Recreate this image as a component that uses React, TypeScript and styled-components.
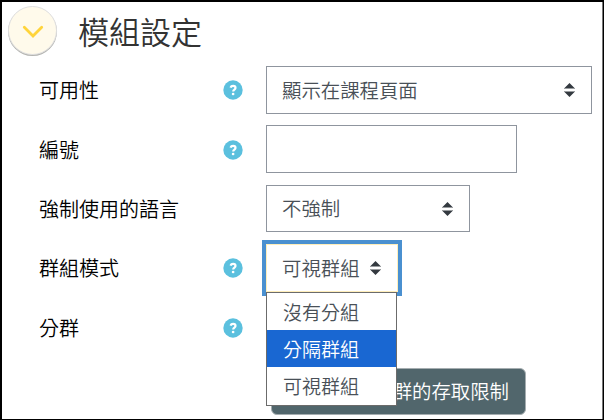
import React from 'react'
import styled, { createGlobalStyle } from 'styled-components'

type FormRowProps = {
  label: string
  help?: boolean
  height?: number
  gap?: number
  children?: React.ReactNode
}

const SortIcon: React.FunctionComponent = () => (
  <svg width="11" height="14" viewBox="0 0 11 14">
    <path d="M5.5 0 L10.5 5 H0.5 Z M5.5 14 L10.5 9 H0.5 Z" fill="#343a40" />
    <path d="M0 5.5 H11 M0 8.5 H11" stroke="#343a40" strokeOpacity="0.5" />
  </svg>
)

const HelpIcon: React.FunctionComponent = () => (
  <svg width="20" height="20" viewBox="0 0 20 20">
    <circle cx="10" cy="10" r="9.7" fill="#5bc0de" />
    <path
      d="M7.5 7.6 C8 6.3 8.9 5.9 10.1 5.9 C11.6 5.9 12.5 6.7 12.5 7.9 C12.5 9.6 10.2 9.5 10.2 11.5"
      fill="none"
      stroke="#fff"
      strokeWidth="2.2"
    />
    <circle cx="10.1" cy="14" r="1.35" fill="#fff" />
  </svg>
)

const FormRow: React.FunctionComponent<FormRowProps> = ({ label, help = true, height = 48, gap = 12, children }) => (
  <StyledRow $height={height} $gap={gap}>
    <StyledLabel>{label}</StyledLabel>
    <StyledHelp>{help && <HelpIcon />}</StyledHelp>
    {children}
  </StyledRow>
)

const options = ['沒有分組', '分隔群組', '可視群組']

const App: React.FunctionComponent = () => (
  <StyledPage>
    <GlobalStyle />
    <StyledHeader>
      <StyledToggle>
        <svg width="22" height="14" viewBox="0 0 22 14">
          <path d="M2.3 2.3 L11 11 L19.7 2.3" fill="none" stroke="#ffd43b" strokeWidth="2.8" strokeLinecap="round" />
        </svg>
      </StyledToggle>
      <StyledTitle>模組設定</StyledTitle>
    </StyledHeader>
    <FormRow label="可用性" gap={11}>
      <StyledSelect $width={326}>
        <span>顯示在課程頁面</span>
        <SortIcon />
      </StyledSelect>
    </FormRow>
    <FormRow label="編號" height={50} gap={10}>
      <StyledInput type="text" />
    </FormRow>
    <FormRow label="強制使用的語言" help={false} height={47}>
      <StyledSelect $width={204}>
        <span>不強制</span>
        <SortIcon />
      </StyledSelect>
    </FormRow>
    <FormRow label="群組模式">
      <StyledSelect $width={132} $focused>
        <span>可視群組</span>
        <SortIcon />
        <StyledMenu>
          {options.map((option, index) => (
            <StyledOption key={option} $selected={index === 1}>
              {option}
            </StyledOption>
          ))}
        </StyledMenu>
      </StyledSelect>
    </FormRow>
    <FormRow label="分群" gap={16} />
    <StyledButton>群的存取限制</StyledButton>
  </StyledPage>
)

const GlobalStyle = createGlobalStyle`
  * {
    box-sizing: border-box;
  }

  body {
    margin: 0;
    background: #fff;
    font-family: 'Noto Sans CJK TC', sans-serif;
    font-weight: 350;
  }
`

const StyledPage = styled('div')`
  width: 604px;
  height: 420px;
  overflow: hidden;
  background: #fff;
  border: solid #000;
  border-width: 2px 1px 1px 2px;
  box-shadow: inset -1px 0 0 #777;
`

const StyledHeader = styled('div')`
  display: flex;
  align-items: flex-start;
  height: 64px;
  padding: 4px 0 0 6px;
`

const StyledToggle = styled('span')`
  display: flex;
  align-items: center;
  justify-content: center;
  width: 49px;
  height: 49px;
  padding-top: 3px;
  border: 1px solid #dfdfe0;
  border-radius: 50%;
  box-shadow: 0 1px 0 #b4b4b0;
  background: #fffaeb;
`

const StyledTitle = styled('h3')`
  margin: 0 0 0 21px;
  color: #333;
  font-size: 31px;
  font-weight: 350;
  line-height: 50px;
`

const StyledRow = styled('div')<{ $height: number; $gap: number }>`
  display: grid;
  grid-template-columns: 184px 43px auto;
  align-items: center;
  justify-content: start;
  height: ${({ $height }) => $height}px;
  margin-bottom: ${({ $gap }) => $gap}px;
  padding-left: 37px;
`

const StyledLabel = styled('label')`
  color: #000;
  font-size: 20px;
  line-height: 30px;
`

const StyledHelp = styled('span')`
  display: flex;
`

const StyledSelect = styled('div')<{ $width: number; $focused?: boolean }>`
  position: relative;
  display: flex;
  align-items: center;
  justify-content: space-between;
  width: ${({ $width }) => $width}px;
  height: 100%;
  padding: 0 16px 0 15px;
  border: 1px solid ${({ $focused }) => ($focused ? '#ffeeba' : '#8f959e')};
  box-shadow: ${({ $focused }) => ($focused ? '0 0 0 4px #4a90d0' : 'none')};
  background: #fff;
  color: #495057;
  font-size: 19.4px;
  line-height: 27px;

  > span {
    padding-bottom: 2px;
  }
`

const StyledInput = styled('input')`
  align-self: start;
  width: 251px;
  height: 48px;
  border: 1px solid #8f959e;
  background: #fff;
`

const StyledMenu = styled('div')`
  position: absolute;
  top: 47px;
  left: -1px;
  z-index: 1;
  width: 131px;
  height: 114px;
  border: 1px solid #6b6b6b;
  background: #fff;
`

const StyledOption = styled('div')<{ $selected: boolean }>`
  height: 37px;
  padding-left: 16px;
  background: ${({ $selected }) => ($selected ? '#1967d2' : '#fff')};
  color: ${({ $selected }) => ($selected ? '#fff' : '#495057')};
  font-size: 19px;
  line-height: 38px;
`

const StyledButton = styled('button')`
  display: block;
  width: 255px;
  height: 47px;
  margin-left: 269px;
  padding: 0 16px 2px;
  border: 1px solid #a5adb0;
  border-radius: 6px;
  background: #51666c;
  color: #fff;
  font-family: inherit;
  font-size: 19.4px;
  font-weight: 350;
  text-align: right;
`

export default App
